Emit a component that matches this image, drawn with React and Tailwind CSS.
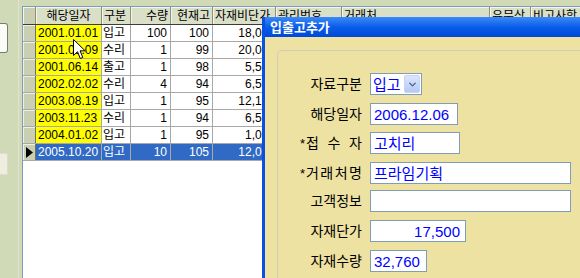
import { ChevronDown } from 'lucide-react'

const rows = [
  { date: '2001.01.01', kind: '입고', qty: '100', stock: '100', price: '18,000' },
  { date: '2001.03.09', kind: '수리', qty: '1', stock: '99', price: '20,000' },
  { date: '2001.06.14', kind: '출고', qty: '1', stock: '98', price: '5,500' },
  { date: '2002.02.02', kind: '수리', qty: '4', stock: '94', price: '6,500' },
  { date: '2003.08.19', kind: '입고', qty: '1', stock: '95', price: '12,100' },
  { date: '2003.11.23', kind: '수리', qty: '1', stock: '94', price: '6,500' },
  { date: '2004.01.02', kind: '입고', qty: '1', stock: '95', price: '1,000' },
  { date: '2005.10.20', kind: '입고', qty: '10', stock: '105', price: '12,000', selected: true },
]

const fields = [
  { label: '해당일자', value: '2006.12.06', w: 'w-[88px]', mt: 'mt-[8px]' },
  { label: '접 수 자', star: true, value: '고치리', w: 'w-[90px]', mt: 'mt-[7px]' },
  { label: '거래처명', star: true, value: '프라임기획', w: 'w-[201px]', mt: 'mt-[8px]' },
  { label: '고객정보', value: '', w: 'w-[201px]', mt: 'mt-[6px]' },
  { label: '자재단가', value: '17,500', w: 'w-[96px]', mt: 'mt-[8px]', right: true },
  { label: '자재수량', value: '32,760', w: 'w-[57px]', mt: 'mt-[8px]' },
]

function Head({ w, align = 'justify-start', children }) {
  return (
    <div className={`${w} shrink-0 h-full flex items-center ${align} px-[2px] border-r border-[#8d8f7c] shadow-[inset_1px_1px_0_#f4f5ec] whitespace-nowrap overflow-hidden`}>
      {children}
    </div>
  )
}

function Cell({ w, align = 'justify-end', className = '', children }) {
  return (
    <div className={`${w} shrink-0 h-full flex items-center ${align} px-[3px] border-r border-[#a8a8a8] whitespace-nowrap overflow-hidden ${className}`}>
      {children}
    </div>
  )
}

export default function App() {
  return (
    <div className="relative w-[580px] h-[278px] overflow-hidden bg-[#d0dab6] flex font-['Liberation_Sans','Noto_Sans_CJK_KR',sans-serif] text-[12px] text-black">
      {/* left buttons */}
      <div className="w-[18px] shrink-0 flex flex-col">
        <div className="mt-[23px] w-[8px] h-[30px] bg-[#fbfbf8] border border-l-0 border-[#7a7a70] rounded-r-[3px]" />
        <div className="mt-[100px] w-[8px] h-[22px] bg-[#efece0] border border-l-0 border-[#dedbcd] rounded-r-[2px]" />
      </div>
      <div className="w-[1px] shrink-0 bg-[#dfe2d4]" />
      <div className="w-[3px] shrink-0" />

      {/* grid */}
      <div className="flex-1 mt-[6px] bg-white border-t border-l border-[#7f9db9] flex flex-col">
        <div className="h-[18px] flex border-b border-[#3c3c34] bg-[#dadfc8] leading-[16px]">
          <div className="w-[13px] shrink-0 h-full border-r border-[#8d8f7c] bg-[#cacfb2] shadow-[inset_1px_1px_0_#f4f5ec]" />
          <Head w="w-[66px]" align="justify-center">해당일자</Head>
          <Head w="w-[29px]">구분</Head>
          <Head w="w-[40px]" align="justify-end">수량</Head>
          <Head w="w-[42px]" align="justify-end">현재고</Head>
          <Head w="w-[63px]">자재비단가</Head>
          <Head w="w-[66px]">관리번호</Head>
          <Head w="w-[148px]">거래처</Head>
          <Head w="w-[41px]">유무상</Head>
          <Head w="w-[60px]">비고사항</Head>
        </div>
        {rows.map((r) => (
          <div
            key={r.date}
            className={`h-[17px] flex border-b leading-[16px] ${r.selected ? 'bg-[#316ac5] text-white border-[#a8a8a8]' : 'border-[#a8a8a8]'}`}
          >
            <div className="w-[13px] shrink-0 h-full flex items-center justify-center border-r border-[#6f715f] bg-[#cacfb2] shadow-[inset_1px_1px_0_#eef0e4] text-black">
              {r.selected && (
                <svg width="7" height="11" viewBox="0 0 7 11"><path d="M0 0 L7 5.5 L0 11 Z" fill="#000" /></svg>
              )}
            </div>
            <Cell w="w-[66px]" align="justify-start" className={`pl-[2px] ${r.selected ? '' : 'bg-[#ffff00]'}`}>{r.date}</Cell>
            <Cell w="w-[29px]" align="justify-start" className="pl-[1px]">{r.kind}</Cell>
            <Cell w="w-[40px]">{r.qty}</Cell>
            <Cell w="w-[42px]">{r.stock}</Cell>
            <Cell w="w-[63px]" className="pr-[0px]">{r.price}</Cell>
            <Cell w="w-[66px]" />
            <Cell w="w-[148px]" />
          </div>
        ))}
      </div>

      {/* mouse cursor */}
      <svg className="absolute left-[73px] top-[39px]" width="13" height="21" viewBox="0 0 13 21">
        <path d="M0.5 0.5 L0.5 16.5 L4.5 12.7 L7.3 19.5 L9.8 18.5 L7.1 11.8 L12.2 11.8 Z" fill="#fff" stroke="#000" strokeWidth="1" strokeLinejoin="miter" />
      </svg>

      {/* dialog window */}
      <div className="absolute left-[262px] top-[17px] w-[330px] h-[270px] flex flex-col border-l-[3px] border-[#0b4fe2] bg-[#eee2a2] font-['Liberation_Sans','Noto_Sans_CJK_KR',sans-serif]">
        <div className="h-[20px] shrink-0 flex items-center pl-[5px] bg-gradient-to-b from-[#3a8af8] via-[#0a5ce9] to-[#0048d8] text-white text-[13px] font-bold leading-none">
          입출고추가
        </div>
        <div className="flex-1 pl-[12px] pt-[13px]">
          <div className="h-full border border-r-0 border-b-0 border-[#cfcdc0] rounded-tl-[5px] pt-[22px] flex flex-col text-[14px]">
            <div className="h-[22px] flex items-center">
              <div className="w-[84px] text-right leading-none">자료구분</div>
              <div className="ml-[8px] w-[52px] h-[22px] bg-white border border-[#7f9db9] flex items-center">
                <span className="flex-1 pl-[2px] text-[15px] text-[#0000ff] leading-none">입고</span>
                <div className="w-[16px] h-[18px] mr-[1px] rounded-[2px] bg-gradient-to-b from-[#dce6fd] to-[#b5c9f6] border border-[#c3d3fa] flex items-center justify-center">
                  <ChevronDown size={11} strokeWidth={3} className="text-[#4d6185]" />
                </div>
              </div>
            </div>
            {fields.map((f) => (
              <div key={f.label} className={`h-[22px] flex items-center ${f.mt}`}>
                <div className="w-[84px] flex justify-end items-center leading-none">
                  {f.star && <span className="mr-[1px] font-['Liberation_Sans'] text-[13px]">*</span>}
                  {f.star ? (
                    <span className="w-[56px] flex justify-between">
                      {f.label.replace(/ /g, '').split('').map((c) => <span key={c}>{c}</span>)}
                    </span>
                  ) : (
                    <span>{f.label}</span>
                  )}
                </div>
                <div className={`ml-[8px] ${f.w} h-[22px] bg-white border border-[#7f9db9] flex items-center px-[3px] text-[15px] text-[#0000ff] leading-none ${f.right ? 'justify-end pr-[5px]' : 'justify-start'}`}>
                  {f.value}
                </div>
              </div>
            ))}
          </div>
        </div>
      </div>
    </div>
  )
}
